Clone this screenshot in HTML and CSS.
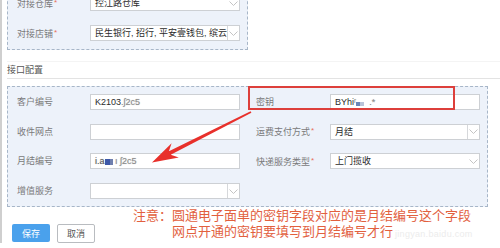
FILE: index.html
```html
<!DOCTYPE html>
<html lang="zh-CN">
<head>
<meta charset="utf-8">
<title>接口配置</title>
<link rel="stylesheet" href="styles.css">
</head>
<body>
<div class="page">
  <div class="panel panel-top">
    <div class="grid grid-one">
      <div class="label">对接仓库<i>*</i></div>
      <div class="field select"><span class="val">控江路仓库</span><span class="chev"><svg width="9" height="5" viewBox="0 0 9 5"><polyline points="0.5,0.5 4.5,4.5 8.5,0.5" fill="none" stroke="#c4c4c4" stroke-width="1"/></svg></span></div>
      <div class="label">对接店铺<i>*</i></div>
      <div class="field select sep"><span class="val">民生银行, 招行, 平安壹钱包, 缤云科技</span><span class="chev"><svg width="9" height="5" viewBox="0 0 9 5"><polyline points="0.5,0.5 4.5,4.5 8.5,0.5" fill="none" stroke="#c4c4c4" stroke-width="1"/></svg></span></div>
    </div>
  </div>

  <div class="section-title">接口配置</div>

  <div class="annot-wrap">
    <div class="panel panel-main">
      <div class="grid grid-two">
        <div class="label">客户编号</div>
        <div class="field"><span class="val">K2103<span class="blur">.ʃ2c5</span></span></div>
        <div class="label right">密钥</div>
        <div class="field"><span class="val">BYhi<span class="blur">ʳ</span><span class="mz m3"></span><span class="mz m4"></span><span class="blur">  .*</span></span></div>

        <div class="label">收件网点</div>
        <div class="field"></div>
        <div class="label right">运费支付方式<i>*</i></div>
        <div class="field select sep"><span class="val">月结</span><span class="chev"><svg width="9" height="5" viewBox="0 0 9 5"><polyline points="0.5,0.5 4.5,4.5 8.5,0.5" fill="none" stroke="#c4c4c4" stroke-width="1"/></svg></span></div>

        <div class="label">月结编号</div>
        <div class="field"><span class="val"><span class="blur dk">i.a</span><span class="mz m1"></span><span class="mz m2"></span><span class="blur"> ı ʃ2c5</span></span></div>
        <div class="label right">快递服务类型<i>*</i></div>
        <div class="field select"><span class="val">上门揽收</span><span class="chev"><svg width="9" height="5" viewBox="0 0 9 5"><polyline points="0.5,0.5 4.5,4.5 8.5,0.5" fill="none" stroke="#c4c4c4" stroke-width="1"/></svg></span></div>

        <div class="label">增值服务</div>
        <div class="field select sep"><span class="val"></span><span class="chev"><svg width="9" height="5" viewBox="0 0 9 5"><polyline points="0.5,0.5 4.5,4.5 8.5,0.5" fill="none" stroke="#c4c4c4" stroke-width="1"/></svg></span></div>
      </div>
    </div>
    <div class="redbox"></div>
    <svg class="arrow" width="500" height="248" viewBox="0 0 500 248">
      <polygon points="152,162.5 178.8,157.4 170.7,154.8 251.4,112.8 250.6,111.2 168.9,151.2 171.6,143.2" fill="#e8302b"/>
    </svg>
  </div>

  <div class="footer">
    <div class="buttons">
      <button class="btn btn-primary">保存</button>
      <button class="btn btn-default">取消</button>
    </div>
    <div class="note">
      <span class="note-head">注意：</span>
      <div class="note-body">
        <div>圆通电子面单的密钥字段对应的是月结编号这个字段</div>
        <div>网点开通的密钥要填写到月结编号才行</div>
      </div>
    </div>
    <div class="watermark">jingyan.baidu.com</div>
  </div>
</div>
</body>
</html>
```

FILE: styles.css
```css
html, body {
  margin: 0;
  padding: 0;
  background: #fff;
}
body {
  width: 500px;
  height: 248px;
  overflow: hidden;
  font-family: "Liberation Sans", "Noto Sans CJK SC", sans-serif;
  font-size: 9px;
  color: #333;
}
.page {
  border-left: 2px solid #cfcfcf;
  padding-left: 5px;
  min-height: 248px;
  box-sizing: border-box;
}
.panel {
  background: #edf2fa;
  border: 1px dashed #a7b6c8;
  width: fit-content;
}
.panel-top {
  margin-top: -14px;
  padding: 8px 7px 8px 9px;
}
.panel-main {
  padding: 7px 7px 7px 9px;
}
.grid {
  display: grid;
  align-items: center;
}
.grid-one {
  grid-template-columns: 73px 150px;
  grid-auto-rows: 16px;
  row-gap: 14px;
}
.grid-two {
  grid-template-columns: 73px 150px 90px 150px;
  grid-auto-rows: 16px;
  row-gap: 13.7px;
}
.label {
  color: #7a7a7a;
  line-height: 16px;
  white-space: nowrap;
}
.label i {
  font-style: normal;
  color: #e8705a;
  font-size: 8px;
  vertical-align: 2px;
  margin-left: 1px;
}
.label.right {
  padding-left: 16px;
}
.field {
  height: 16px;
  box-sizing: border-box;
  background: #fff;
  border: 1px solid #cdd0d4;
  display: flex;
  align-items: center;
  overflow: hidden;
}
.val {
  flex: 1;
  padding-left: 4px;
  white-space: nowrap;
  overflow: hidden;
  color: #2b2b2b;
  line-height: 14px;
}
.chev {
  width: 11px;
  height: 14px;
  flex: none;
  display: flex;
  align-items: center;
  justify-content: center;
}
.chev svg {
  display: block;
}
.select.sep .chev {
  border-left: 1px solid #d6d8db;
}
.blur {
  color: #8d8d8d;
  text-shadow: 0 0 1px #b8b8b8;
  white-space: pre;
}
.blur.dk {
  color: #555;
}
.mz {
  display: inline-block;
  width: 4px;
  height: 6px;
  vertical-align: -1px;
}
.mz.m1 { background: #3d58a8; width: 5px; }
.mz.m2 { background: #6f7fae; width: 3px; }
.mz.m3 { background: #6a86b8; width: 4px; height: 4px; }
.mz.m4 { background: #b9c4d9; width: 4px; height: 4px; }

.section-title {
  margin-top: 11px;
  height: 16px;
  line-height: 16px;
  border-top: 1px solid #f4f4f4;
  border-bottom: 1px solid #e3e3e3;
  color: #555;
}
.annot-wrap {
  position: relative;
  margin-top: 7px;
}
.redbox {
  position: absolute;
  left: 241px;
  top: 0;
  width: 207px;
  height: 24px;
  box-sizing: border-box;
  border: 2px solid #dd3f3b;
}
.arrow {
  position: absolute;
  left: -7px;
  top: -86px;
  pointer-events: none;
}
.footer {
  display: flex;
  align-items: flex-start;
  position: relative;
}
.buttons {
  display: flex;
  align-items: flex-start;
  padding-top: 17px;
  margin-left: 5px;
}
.btn {
  font-family: "Liberation Sans", "Noto Sans CJK SC", sans-serif;
  font-size: 9px;
  width: 38px;
  padding: 0;
  border-radius: 2px;
  cursor: pointer;
}
.btn-primary {
  height: 18px;
  border: none;
  background: #4aa1ec;
  color: #fff;
}
.btn-default {
  height: 19px;
  margin-left: 7px;
  border: 1px solid #b9bcc0;
  background: #fff;
  color: #555;
}
.note {
  display: flex;
  margin-left: 38px;
  margin-top: 1px;
  font-size: 13px;
  line-height: 16px;
  color: #e2603e;
  white-space: nowrap;
}
.watermark {
  position: absolute;
  left: 388px;
  top: 22px;
  font-size: 9px;
  color: #ececec;
  letter-spacing: 0.3px;
}
```
